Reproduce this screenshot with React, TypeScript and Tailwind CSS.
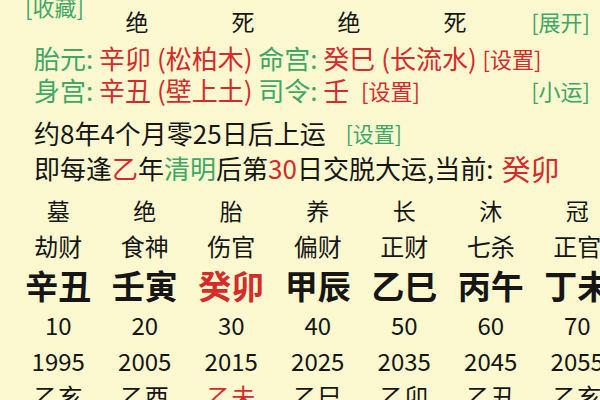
import React from 'react';

const green = 'text-[#3fa767]';
const red = 'text-[#d52b2b]';

type Col = { stage: string; god: string; pillar: string; age: string; year: string; next: string; hot?: boolean };

const cols: Col[] = [
  { stage: '墓', god: '劫财', pillar: '辛丑', age: '10', year: '1995', next: '乙亥' },
  { stage: '绝', god: '食神', pillar: '壬寅', age: '20', year: '2005', next: '乙酉' },
  { stage: '胎', god: '伤官', pillar: '癸卯', age: '30', year: '2015', next: '乙未', hot: true },
  { stage: '养', god: '偏财', pillar: '甲辰', age: '40', year: '2025', next: '乙巳' },
  { stage: '长', god: '正财', pillar: '乙巳', age: '50', year: '2035', next: '乙卯' },
  { stage: '沐', god: '七杀', pillar: '丙午', age: '60', year: '2045', next: '乙丑' },
  { stage: '冠', god: '正官', pillar: '丁未', age: '70', year: '2055', next: '乙亥' },
];

export default function App() {
  return (
    <div
      className="w-[600px] h-[400px] overflow-hidden bg-[#fcf8cf] text-[#161616] flex flex-col"
      style={{ fontFamily: '"Noto Sans CJK SC", "Noto Sans", sans-serif' }}
    >
      {/* top row: stages of pillars */}
      <div className="flex h-[42px] items-center shrink-0 whitespace-nowrap">
        <div className="w-[84px] self-start -mt-[5px] pl-[25px]">
          <span className={`text-[22px] leading-none ${green}`}>[收藏]</span>
        </div>
        {['绝', '死', '绝', '死'].map((s, i) => (
          <div key={i} className="w-[106px] text-center text-[23px] leading-none">{s}</div>
        ))}
        <div className={`ml-auto pr-[10px] text-[22px] leading-none ${green}`}>[展开]</div>
      </div>

      <div className="flex h-[32px] items-center pl-[34px] text-[26px] leading-none whitespace-nowrap shrink-0">
        <span className={green}>胎元: </span>
        <span className={red}>&nbsp;辛卯 (松柏木)&nbsp;</span>
        <span className={green}>命宫: </span>
        <span className={red}>&nbsp;癸巳 (长流水)&nbsp;</span>
        <span className={`${red} text-[22px]`}>[设置]</span>
      </div>

      <div className="flex h-[32px] items-center pl-[34px] pr-[10px] text-[26px] leading-none whitespace-nowrap shrink-0">
        <span className={green}>身宫: </span>
        <span className={red}>&nbsp;辛丑 (壁上土)&nbsp;</span>
        <span className={green}>司令: </span>
        <span className={red}>&nbsp;壬&nbsp;&nbsp;</span>
        <span className={`${red} text-[22px]`}>[设置]</span>
        <span className={`ml-auto text-[22px] ${green}`}>[小运]</span>
      </div>

      <div className="flex h-[36px] mt-[9px] items-center pl-[34px] text-[26px] leading-none whitespace-nowrap shrink-0">
        <span>约8年4个月零25日后上运</span>
        <span className={`ml-[20px] text-[21px] ${green}`}>[设置]</span>
      </div>

      <div className="flex h-[34px] items-center pl-[34px] text-[26px] leading-none whitespace-nowrap shrink-0">
        <span>即每逢</span>
        <span className={red}>乙</span>
        <span>年</span>
        <span className={green}>清明</span>
        <span>后第</span>
        <span className={red}>30</span>
        <span>日交脱大运,当前: </span>
        <span className={`${red} text-[29px] ml-[8px]`}>癸卯</span>
      </div>

      {/* luck pillars */}
      <div className="flex mt-[7px] pl-[15px] whitespace-nowrap">
        {cols.map((c, i) => (
          <div key={i} className="w-[86.5px] shrink-0 flex flex-col items-center">
            <div className="h-[36px] flex items-center text-[23px] leading-none">{c.stage}</div>
            <div className="h-[36px] flex items-center text-[24px] leading-none">{c.god}</div>
            <div className={`h-[42px] flex items-center text-[33px] font-bold leading-none ${c.hot ? red : ''}`}>{c.pillar}</div>
            <div className="h-[38px] flex items-center text-[24px] leading-none">{c.age}</div>
            <div className="h-[34px] flex items-center text-[24px] leading-none">{c.year}</div>
            <div className={`h-[36px] flex items-center text-[24px] leading-none ${c.hot ? red : ''}`}>{c.next}</div>
          </div>
        ))}
      </div>
    </div>
  );
}
